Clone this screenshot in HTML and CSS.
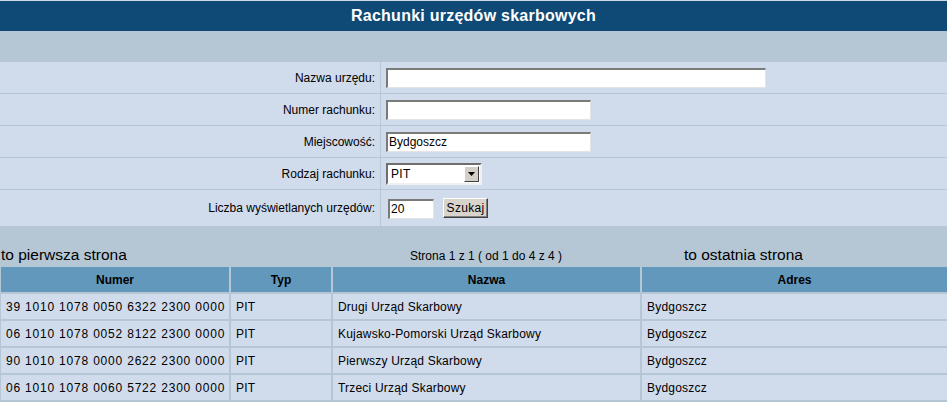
FILE: index.html
```html
<!DOCTYPE html>
<html lang="pl">
<head>
<meta charset="utf-8">
<title>Rachunki urzędów skarbowych</title>
<link rel="stylesheet" href="styles.css">
</head>
<body>
<div class="page">
  <div class="title">Rachunki urzędów skarbowych</div>
  <div class="band"></div>
  <form class="form">
    <div class="label">Nazwa urzędu:</div>
    <div class="field"><input class="text w-long" type="text"></div>
    <div class="label">Numer rachunku:</div>
    <div class="field"><input class="text w-mid" type="text"></div>
    <div class="label">Miejscowość:</div>
    <div class="field"><input class="text w-mid" type="text" value="Bydgoszcz"></div>
    <div class="label">Rodzaj rachunku:</div>
    <div class="field">
      <div class="select">
        <span class="select-value">PIT</span>
        <span class="select-btn"><svg width="7" height="4" viewBox="0 0 7 4"><path d="M0 0h7L3.5 4z" fill="#000"/></svg></span>
      </div>
    </div>
    <div class="label">Liczba wyświetlanych urzędów:</div>
    <div class="field"><input class="text w-short" type="text" value="20"><button class="btn" type="button">Szukaj</button></div>
  </form>
  <div class="pager">
    <span class="pager-first">to pierwsza strona</span>
    <span class="pager-info">Strona 1 z 1 ( od 1 do 4 z 4 )</span>
    <span class="pager-last">to ostatnia strona</span>
  </div>
  <div class="grid">
    <div class="th">Numer</div><div class="th">Typ</div><div class="th">Nazwa</div><div class="th">Adres</div>
    <div class="td num">39 1010 1078 0050 6322 2300 0000</div><div class="td">PIT</div><div class="td">Drugi Urząd Skarbowy</div><div class="td">Bydgoszcz</div>
    <div class="td num">06 1010 1078 0052 8122 2300 0000</div><div class="td">PIT</div><div class="td">Kujawsko-Pomorski Urząd Skarbowy</div><div class="td">Bydgoszcz</div>
    <div class="td num">90 1010 1078 0000 2622 2300 0000</div><div class="td">PIT</div><div class="td">Pierwszy Urząd Skarbowy</div><div class="td">Bydgoszcz</div>
    <div class="td num">06 1010 1078 0060 5722 2300 0000</div><div class="td">PIT</div><div class="td">Trzeci Urząd Skarbowy</div><div class="td">Bydgoszcz</div>
  </div>
</div>
</body>
</html>
```
FILE: styles.css
```css
html, body {
  margin: 0;
  padding: 0;
  background: #b5c7d5;
}
body {
  font-family: "Liberation Sans", Arial, sans-serif;
  font-size: 12px;
  color: #000;
}
.page {
  border-top: 1px solid #cfd9e6;
}
.title {
  height: 30px;
  background: #0e4a75;
  color: #fff;
  font-weight: bold;
  font-size: 16px;
  letter-spacing: 0.25px;
  line-height: 30px;
  text-align: center;
}
.band {
  height: 31px;
}
.form {
  display: grid;
  grid-template-columns: 380px 1fr;
  grid-template-rows: repeat(4, 31px) 36px;
  gap: 1px;
  margin: 0;
}
.label, .field {
  background: #d0dbeb;
  display: flex;
  align-items: center;
}
.label {
  justify-content: flex-end;
  padding-right: 5px;
}
.field {
  padding-left: 5px;
}
.text {
  box-sizing: border-box;
  height: 20px;
  margin: 0;
  padding: 0 1px;
  font-family: "Liberation Sans", Arial, sans-serif;
  font-size: 12px;
  background: #fff;
  border-style: solid;
  border-width: 2px 1px 1px 2px;
  border-color: #7a7a7a #e4e4e4 #e4e4e4 #7a7a7a;
  outline: none;
}
.w-long { width: 380px; }
.w-mid { width: 205px; }
.w-short { width: 46px; margin-left: 2px; margin-top: 1px; }
.select {
  box-sizing: border-box;
  width: 96px;
  height: 22px;
  display: flex;
  align-items: center;
  background: #fff;
  border-style: solid;
  border-width: 2px;
  border-color: #6e6e6e #f0f0f0 #f0f0f0 #6e6e6e;
  padding-right: 1px;
}
.select-value {
  flex: 1;
  padding-left: 3px;
  font-size: 12px;
  letter-spacing: 0.3px;
}
.select-btn {
  box-sizing: border-box;
  width: 15px;
  height: 16px;
  background: #d4d0c8;
  border-style: solid;
  border-width: 1px;
  border-color: #fff #404040 #404040 #fff;
  display: flex;
  align-items: center;
  justify-content: center;
}
.btn {
  box-sizing: border-box;
  width: 45px;
  height: 20px;
  margin: 0 0 0 9px;
  padding: 0;
  font-family: "Liberation Sans", Arial, sans-serif;
  font-size: 12px;
  letter-spacing: 0.3px;
  color: #000;
  background: #d8d4cc;
  border-style: solid;
  border-width: 1px;
  border-color: #fff #404040 #404040 #fff;
  box-shadow: inset -1px -1px 0 #808080;
}
.pager {
  height: 41px;
  box-sizing: border-box;
  display: flex;
  align-items: baseline;
  padding-top: 20px;
  line-height: 18px;
}
.pager-first {
  width: 409px;
  padding-left: 1px;
  font-size: 15.5px;
}
.pager-info {
  width: 274px;
  font-size: 12px;
}
.pager-last {
  font-size: 15.5px;
}
.grid {
  display: grid;
  grid-template-columns: 228px 100px 307px 1fr;
  grid-auto-rows: 25px;
  gap: 2px;
  padding-left: 1px;
}
.th {
  background: #6398bd;
  font-weight: bold;
  display: flex;
  align-items: center;
  justify-content: center;
}
.td {
  background: #d0dbeb;
  display: flex;
  align-items: center;
  padding-left: 5px;
  white-space: nowrap;
  letter-spacing: 0.2px;
}
.td.num {
  letter-spacing: 0.8px;
}
```
